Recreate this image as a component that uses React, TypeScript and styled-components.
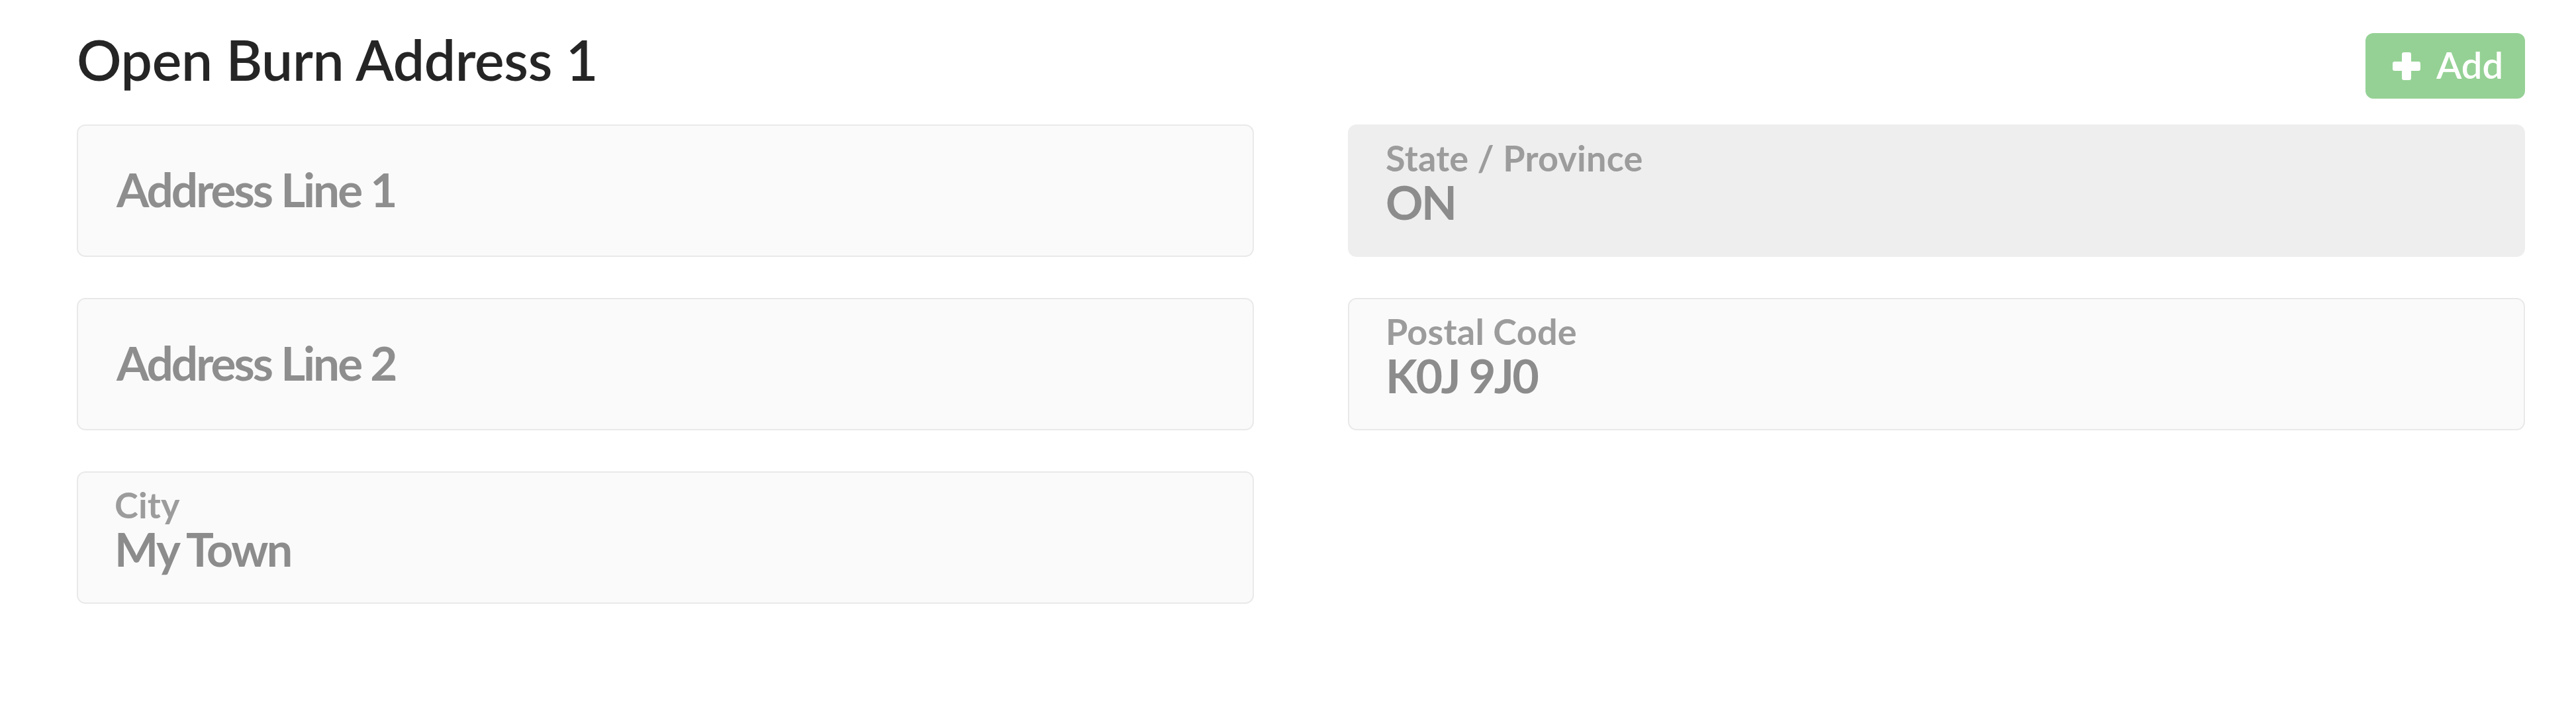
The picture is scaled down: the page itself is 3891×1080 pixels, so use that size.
import styled, { createGlobalStyle } from 'styled-components';

const GlobalStyle = createGlobalStyle`
	html, body {
		margin: 0;
		padding: 0;
		background: #ffffff;
	}
	body {
		font-family: Lato, 'Open Sans', sans-serif;
	}
`;

type FieldData = {
	label: string;
	value?: string;
	disabled?: boolean;
};

const fields: FieldData[] = [
	{ label: 'Address Line 1' },
	{ label: 'State / Province', value: 'ON', disabled: true },
	{ label: 'Address Line 2' },
	{ label: 'Postal Code', value: 'K0J 9J0' },
	{ label: 'City', value: 'My Town' },
];

function PlusIcon() {
	return (
		<svg width="46" height="46" viewBox="0 0 46 46" aria-hidden="true">
			<rect x="16" y="2" width="14" height="42" rx="3" fill="#ffffff" />
			<rect x="2" y="16" width="42" height="14" rx="3" fill="#ffffff" />
		</svg>
	);
}

function Field({ label, value, disabled }: FieldData) {
	const filled = value !== undefined && value !== '';
	return (
		<FieldBox $disabled={!!disabled} $filled={filled}>
			{filled ? (
				<>
					<FieldLabel>{label}</FieldLabel>
					<FieldValue>{value}</FieldValue>
				</>
			) : (
				<Placeholder>{label}</Placeholder>
			)}
		</FieldBox>
	);
}

export default function App() {
	return (
		<>
			<GlobalStyle />
			<Page>
				<Header>
					<Title>Open Burn Address 1</Title>
					<AddButton disabled>
						<PlusIcon />
						<span>Add</span>
					</AddButton>
				</Header>
				<FieldGrid>
					{fields.map((f) => (
						<Field key={f.label} {...f} />
					))}
				</FieldGrid>
			</Page>
		</>
	);
}

const Page = styled.div`
	padding: 39px 77px 0 116px;
	min-height: 1080px;
	box-sizing: border-box;
`;

const Header = styled.div`
	display: flex;
	justify-content: space-between;
	align-items: flex-start;
	height: 110px;
`;

const Title = styled.h1`
	margin: 0;
	font-family: Lato, sans-serif;
	font-size: 84px;
	line-height: 101px;
	font-weight: 600;
	letter-spacing: -0.3px;
	color: #252525;
`;

const AddButton = styled.button`
	margin-top: 11px;
	width: 241px;
	height: 99px;
	display: flex;
	align-items: center;
	justify-content: center;
	gap: 22px;
	padding: 0 0 0 6px;
	border: none;
	border-radius: 12px;
	background-color: #95d195;
	color: #ffffff;
	font-family: Lato, sans-serif;
	font-size: 56px;
	font-weight: 600;
	cursor: default;

	span {
		line-height: 1;
		padding-bottom: 4px;
	}
`;

const FieldGrid = styled.div`
	margin-top: 39px;
	display: grid;
	grid-template-columns: 1fr 1fr;
	column-gap: 142px;
	row-gap: 62px;
`;

const FieldBox = styled.div<{ $disabled: boolean; $filled: boolean }>`
	height: 200px;
	box-sizing: border-box;
	display: flex;
	flex-direction: column;
	justify-content: ${({ $filled }) => ($filled ? 'flex-start' : 'center')};
	padding: ${({ $filled }) => ($filled ? '17px 55px 0' : '0 58px 4px')};
	border: 2.5px solid ${({ $disabled }) => ($disabled ? '#eeeeee' : '#e9e9e9')};
	border-radius: 13px;
	background-color: ${({ $disabled }) => ($disabled ? '#eeeeee' : '#fafafa')};
	font-family: Lato, sans-serif;
`;

const FieldLabel = styled.div`
	font-size: 54px;
	line-height: 63px;
	font-weight: 700;
	letter-spacing: 0.2px;
	color: #9c9c9c;
`;

const FieldValue = styled.div`
	font-size: 70px;
	line-height: 70px;
	font-weight: 700;
	letter-spacing: -2.5px;
	color: #8c8c8c;
`;

const Placeholder = styled.div`
	font-size: 71px;
	line-height: 84px;
	font-weight: 700;
	letter-spacing: -3px;
	color: #8e8e8e;
`;
